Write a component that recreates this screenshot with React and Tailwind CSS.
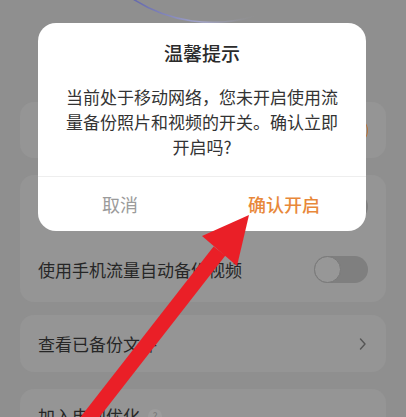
import React from "react";

function Toggle({ on }) {
  return on ? (
    <div className="relative h-[27px] w-[54px] rounded-full bg-[#b8733a]">
      <div className="absolute right-[1px] top-[1px] h-[25px] w-[25px] rounded-full bg-[#969696]" />
    </div>
  ) : (
    <div className="flex h-[27px] w-[54px] items-center rounded-full bg-[#7f7f7f]">
      <div className="h-[27px] w-[27px] rounded-full border border-[#7a7a7a] bg-[#979797]" />
    </div>
  );
}

function Row({ label, right, className = "" }) {
  return (
    <div className={`flex items-center justify-between pl-[18px] pr-[18px] ${className}`}>
      <span className="text-[17px] leading-[24px] text-[#262626]">{label}</span>
      {right}
    </div>
  );
}

export default function App() {
  return (
    <div className="relative h-[417px] w-[406px] overflow-hidden bg-[#8f8f8f] font-['Noto_Sans_CJK_SC','Noto_Sans',sans-serif]">
      {/* top ring arc */}
      <svg className="absolute left-0 top-0" width="406" height="40" viewBox="0 0 406 40">
        <defs>
          <linearGradient id="arcg" x1="133" y1="0" x2="260" y2="0" gradientUnits="userSpaceOnUse">
            <stop offset="0" stopColor="#6468ad" />
            <stop offset="0.55" stopColor="#a4a6c8" />
            <stop offset="1" stopColor="#8f8f8f" stopOpacity="0" />
          </linearGradient>
        </defs>
        <path d="M 133 -1 A 146 146 0 0 0 255 16" fill="none" stroke="url(#arcg)" strokeWidth="1.6" />
      </svg>

      {/* page content */}
      <div className="flex flex-col px-[20px] pt-[102px]">
        <div className="h-[56px] rounded-[14px] bg-[#959595]">
          <Row label="使用手机流量自动备份照片" right={<Toggle on />} className="h-full" />
        </div>
        <div className="mt-[17px] flex h-[127px] flex-col rounded-[14px] bg-[#959595]">
          <Row label="仅在充电时备份" right={<Toggle />} className="h-[62px]" />
          <Row label="使用手机流量自动备份视频" right={<Toggle />} className="h-[65px]" />
        </div>
        <div className="mt-[13px] h-[57px] rounded-[14px] bg-[#959595]">
          <Row
            label="查看已备份文件"
            className="h-full"
            right={
              <svg width="8" height="14" viewBox="0 0 8 14" className="mr-[1px]">
                <polyline points="1.5,2 6,7 1.5,12" fill="none" stroke="#555555" strokeWidth="1.4" strokeLinecap="round" strokeLinejoin="round" />
              </svg>
            }
          />
        </div>
        <div className="mt-[17px] h-[60px] rounded-[14px] bg-[#959595]">
          <div className="flex items-center pl-[18px] pt-[15px]">
            <span className="text-[17px] leading-[24px] text-[#262626]">加入电视优化</span>
            <span className="ml-[8px] flex h-[14px] w-[14px] items-center justify-center rounded-full bg-[#9c9c9c] text-[10px] leading-none text-[#777777]">
              ?
            </span>
          </div>
        </div>
      </div>

      {/* dialog */}
      <div className="absolute left-[38px] top-[23px] flex h-[208px] w-[328px] flex-col rounded-[18px] bg-white">
        <div className="pt-[17px] text-center text-[19px] font-medium leading-[26px] text-[#2b2b2b]">温馨提示</div>
        <div className="mx-auto mt-[18px] w-[276px] text-center text-[17px] leading-[25px] text-[#333333]">
          当前处于移动网络，您未开启使用流量备份照片和视频的开关。确认立即开启吗?
        </div>
        <div className="mt-auto flex h-[55px] border-t border-[#eeeeee]">
          <div className="flex flex-1 items-center justify-center text-[18px] text-[#9b9b9b]">取消</div>
          <div className="flex flex-1 items-center justify-center text-[18px] font-medium text-[#e8883a]">确认开启</div>
        </div>
      </div>

      {/* red annotation arrow */}
      <svg className="pointer-events-none absolute left-0 top-0" width="406" height="417" viewBox="0 0 406 417">
        <polygon points="249,215 202,236 237,266" fill="#ea1f27" />
        <polygon points="225.4,255.6 213.6,246.4 74,425.4 85.8,434.6" fill="#ea1f27" />
      </svg>
    </div>
  );
}
